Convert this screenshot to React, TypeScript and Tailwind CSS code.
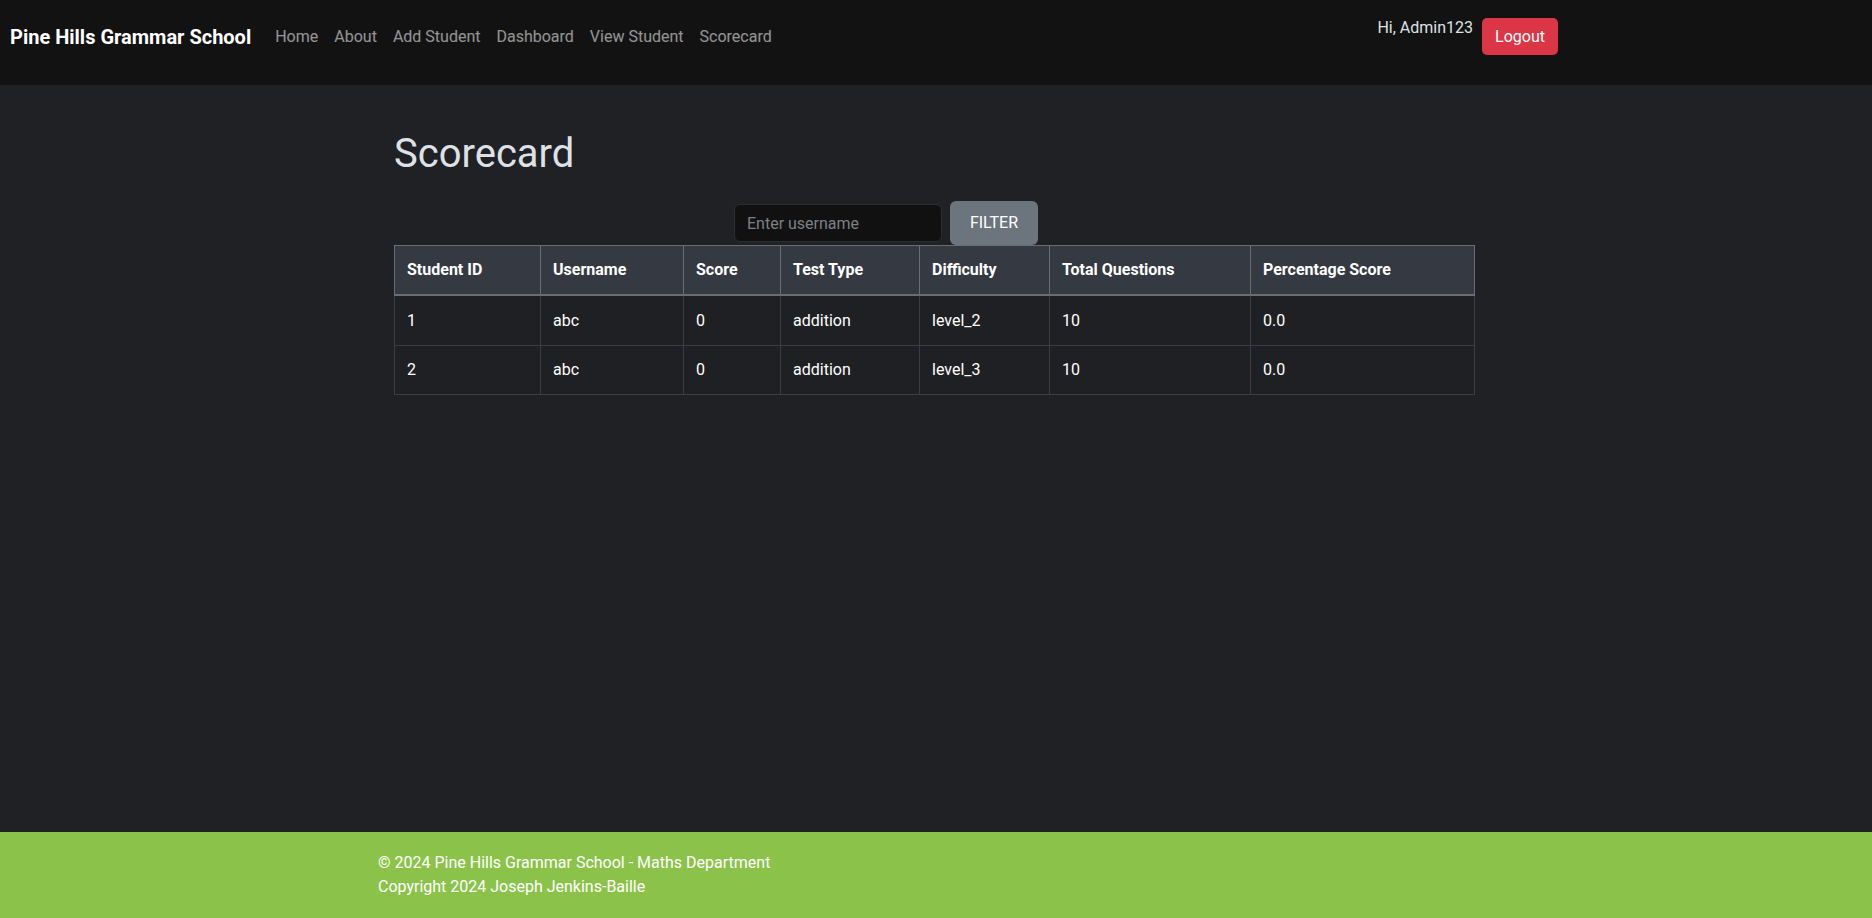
import React from "react";

const rows = [
  { id: 1, username: "abc", score: 0, type: "addition", level: "level_2", total: 10, pct: "0.0" },
  { id: 2, username: "abc", score: 0, type: "addition", level: "level_3", total: 10, pct: "0.0" },
];

const headers = ["Student ID", "Username", "Score", "Test Type", "Difficulty", "Total Questions", "Percentage Score"];

export default function App() {
  return (
    <div className="min-h-screen flex flex-col bg-[#202124] text-[#dee2e6] font-['Roboto','Liberation_Sans',sans-serif]">
      {/* navbar */}
      <nav className="h-[85px] pb-[11px] flex items-center bg-[#121212] pl-[10px]">
        <span className="text-[20px] leading-[30px] font-bold text-white mr-[16px]">
          Pine Hills Grammar School
        </span>
        <div className="flex items-center">
          {["Home", "About", "Add Student", "Dashboard", "View Student", "Scorecard"].map((l) => (
            <a key={l} className="px-2 text-[16px] leading-6 text-white/55">
              {l}
            </a>
          ))}
        </div>
        <div className="ml-auto mr-[314px] flex items-start self-stretch">
          <span className="mt-[16px] text-[16px] leading-6 text-[#dee2e6]">Hi, Admin123</span>
          <button className="ml-[9px] mt-[18px] h-[37px] w-[76px] rounded-[5px] bg-[#dc3545] text-white text-[16px]">
            Logout
          </button>
        </div>
      </nav>

      {/* main */}
      <main className="flex-1">
        <div className="mx-auto w-[1140px] pl-[28px] pr-[32px]">
          <h1 className="mt-[45px] mb-[23px] text-[40px] leading-[48px] font-normal text-[#dee2e6]">Scorecard</h1>

          <div className="flex items-center ml-[340px]">
            <input
              placeholder="Enter username"
              className="w-[208px] h-[38px] px-3 rounded-[6px] bg-[#111111] border border-[#2c2e31] text-[16px] text-white placeholder:text-[#7d8086] outline-none"
            />
            <button className="ml-2 h-[44px] w-[88px] rounded-[6px] bg-[#6c757d] text-white text-[16px]">
              FILTER
            </button>
          </div>

          <table className="w-[1080px] table-fixed border-collapse text-[16px] leading-6">
            <colgroup>
              <col className="w-[146px]" />
              <col className="w-[143px]" />
              <col className="w-[97px]" />
              <col className="w-[139px]" />
              <col className="w-[130px]" />
              <col className="w-[201px]" />
              <col className="w-[224px]" />
            </colgroup>
            <thead>
              <tr className="bg-[#353941]">
                {headers.map((h) => (
                  <th
                    key={h}
                    className="text-left font-bold text-white px-3 pt-3 pb-3 border border-[#6a6e74] border-b-2"
                  >
                    {h}
                  </th>
                ))}
              </tr>
            </thead>
            <tbody>
              {rows.map((r) => (
                <tr key={r.id} className="bg-[#1f2023]">
                  {[r.id, r.username, r.score, r.type, r.level, r.total, r.pct].map((v, i) => (
                    <td key={i} className="px-3 pt-[12.5px] pb-3 text-white border border-[#3a3d41]">
                      {v}
                    </td>
                  ))}
                </tr>
              ))}
            </tbody>
          </table>
        </div>
      </main>

      {/* footer */}
      <footer className="h-[86px] bg-[#8bc34a] text-white">
        <div className="mx-auto w-[1140px] px-3 pt-[19px] text-[16px] leading-6">
          <p>© 2024 Pine Hills Grammar School - Maths Department</p>
          <p>Copyright 2024 Joseph Jenkins-Baille</p>
        </div>
      </footer>
    </div>
  );
}
